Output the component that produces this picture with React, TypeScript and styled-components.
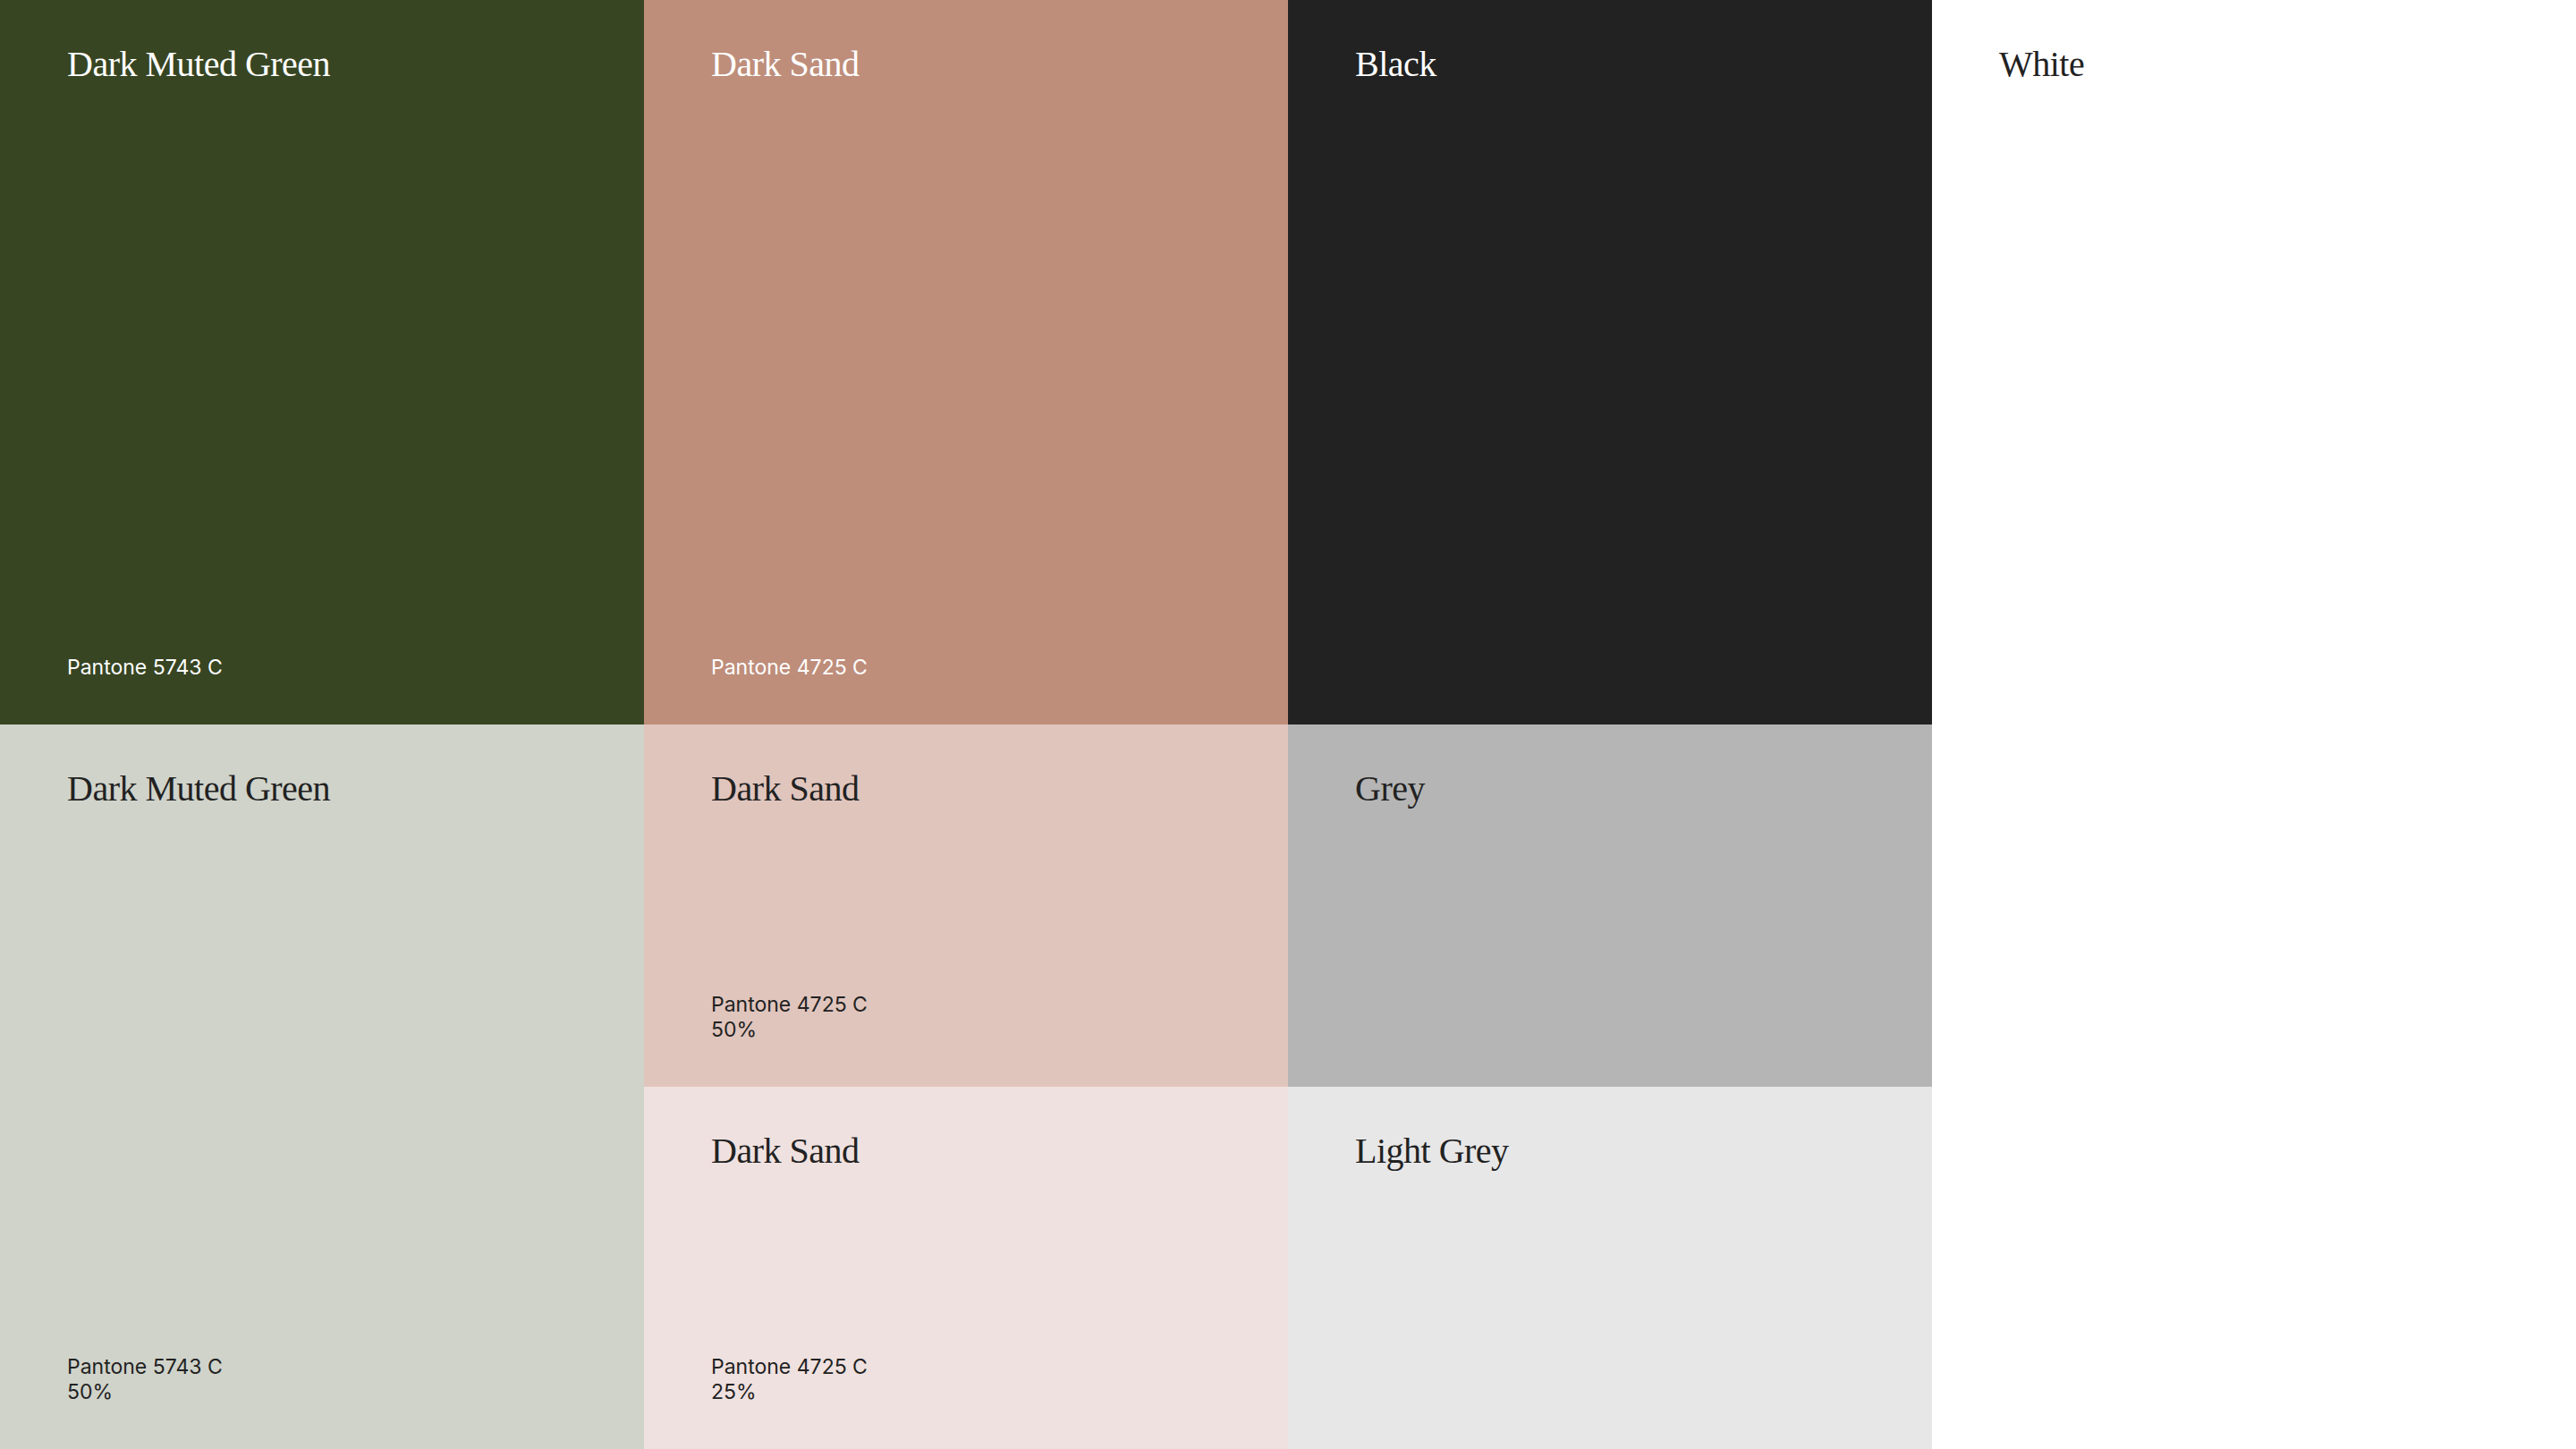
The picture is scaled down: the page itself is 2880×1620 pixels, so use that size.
import React from "react";
import styled, { createGlobalStyle } from "styled-components";

const Global = createGlobalStyle`
  html, body { margin: 0; padding: 0; background: #fff; }
`;

const Grid = styled.div`
  display: grid;
  grid-template-columns: repeat(4, 720px);
  grid-template-rows: 810px 405px 405px;
  width: 2880px;
  height: 1620px;
`;

const Swatch = styled.div<{ $bg: string; $fg: string; $col: string; $row: string }>`
  grid-column: ${(p) => p.$col};
  grid-row: ${(p) => p.$row};
  background: ${(p) => p.$bg};
  color: ${(p) => p.$fg};
  display: flex;
  flex-direction: column;
  justify-content: space-between;
  padding: 48px 75px 50px;
  box-sizing: border-box;
`;

const Title = styled.div`
  font-family: "Liberation Serif", "DejaVu Serif", serif;
  font-size: 40px;
  line-height: 48px;
  letter-spacing: -0.5px;
`;

const Info = styled.div`
  font-family: "Inter", "Noto Sans", sans-serif;
  font-size: 23px;
  line-height: 28px;
`;

const items = [
  { t: "Dark Muted Green", i: ["Pantone 5743 C"], bg: "#374522", fg: "#ffffff", col: "1", row: "1" },
  { t: "Dark Sand", i: ["Pantone 4725 C"], bg: "#be8e7b", fg: "#ffffff", col: "2", row: "1" },
  { t: "Black", i: [], bg: "#222222", fg: "#ffffff", col: "3", row: "1" },
  { t: "White", i: [], bg: "#ffffff", fg: "#222222", col: "4", row: "1 / span 3" },
  { t: "Dark Muted Green", i: ["Pantone 5743 C", "50%"], bg: "#d0d3ca", fg: "#222222", col: "1", row: "2 / span 2" },
  { t: "Dark Sand", i: ["Pantone 4725 C", "50%"], bg: "#e0c5bd", fg: "#222222", col: "2", row: "2" },
  { t: "Grey", i: [], bg: "#b5b5b5", fg: "#222222", col: "3", row: "2" },
  { t: "Dark Sand", i: ["Pantone 4725 C", "25%"], bg: "#efe1df", fg: "#222222", col: "2", row: "3" },
  { t: "Light Grey", i: [], bg: "#e7e7e7", fg: "#222222", col: "3", row: "3" },
];

export default function App() {
  return (
    <>
      <Global />
      <Grid>
        {items.map((s, k) => (
          <Swatch key={k} $bg={s.bg} $fg={s.fg} $col={s.col} $row={s.row}>
            <Title>{s.t}</Title>
            {s.i.length > 0 && (
              <Info>
                {s.i.map((l, j) => (
                  <div key={j}>{l}</div>
                ))}
              </Info>
            )}
          </Swatch>
        ))}
      </Grid>
    </>
  );
}
